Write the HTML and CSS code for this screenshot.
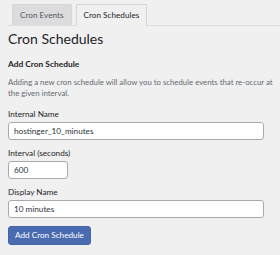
FILE: index.html
```html
<!DOCTYPE html>
<html lang="en">
<head>
    <meta charset="UTF-8">
    <title>Cron Schedules</title>
    <link rel="stylesheet" href="styles.css">
</head>
<body>
    <div class="wrap">
        <nav class="nav-tab-wrapper">
            <a class="nav-tab" href="#">Cron Events</a>
            <a class="nav-tab nav-tab-active" href="#">Cron Schedules</a>
        </nav>

        <h1>Cron Schedules</h1>

        <!-- Add form -->
        <h2>Add Cron Schedule</h2>
        <p class="description">Adding a new cron schedule will allow you to schedule events that re-occur at the given interval.</p>

        <form>
            <div class="field">
                <label for="name">Internal Name</label>
                <input type="text" id="name" class="regular-text" value="hostinger_10_minutes">
            </div>
            <div class="field">
                <label for="interval">Interval (seconds)</label>
                <input type="text" id="interval" class="small-text" value="600">
            </div>
            <div class="field">
                <label for="display">Display Name</label>
                <input type="text" id="display" class="regular-text" value="10 minutes">
            </div>
            <button type="button" class="button-primary">Add Cron Schedule</button>
        </form>
    </div>
</body>
</html>
```

FILE: styles.css
```css
* {
    margin: 0;
    padding: 0;
    box-sizing: border-box;
}

body {
    font-family: Lato, "Noto Sans", sans-serif;
    font-size: 8.2px;
    line-height: 11px;
    background-color: #f0f0f1;
    color: #1d2327;
    overflow: hidden;
}

.wrap {
    padding: 0 0 0 8px;
}

.nav-tab-wrapper {
    display: flex;
    padding-top: 4px;
    border-bottom: 1px solid #dcdcde;
}

.nav-tab {
    display: block;
    height: 21px;
    line-height: 20px;
    margin-left: 4px;
    margin-bottom: -1px;
    padding: 0 7px;
    border: 1px solid #d6d6d8;
    border-bottom: none;
    background: #dcdcde;
    color: #50575e;
    text-decoration: none;
}

.nav-tab-active {
    height: 22px;
    background: #f0f0f1;
    color: #1d2327;
}

h1 {
    font-size: 14px;
    font-weight: normal;
    line-height: 16px;
    margin-top: 5px;
}

h2 {
    font-size: 8.4px;
    font-weight: bold;
    margin-top: 11.5px;
}

.description {
    font-size: 7.8px;
    color: #646970;
    margin-top: 7.5px;
}

form {
    margin-top: 9.5px;
}

.field {
    margin-bottom: 8px;
}

label {
    display: block;
    margin-bottom: 2px;
}

input {
    display: block;
    height: 18px;
    padding: 0 5px;
    font: inherit;
    color: #2c3338;
    background: white;
    border: 1px solid #a7aaad;
    border-radius: 3px;
}

.regular-text {
    width: 256px;
}

.small-text {
    width: 60px;
}

.button-primary {
    display: block;
    height: 19px;
    padding: 0 6px;
    margin-top: 7px;
    font: inherit;
    color: white;
    background: #4a6bb0;
    border: 1px solid #4465aa;
    border-radius: 3px;
}
```
